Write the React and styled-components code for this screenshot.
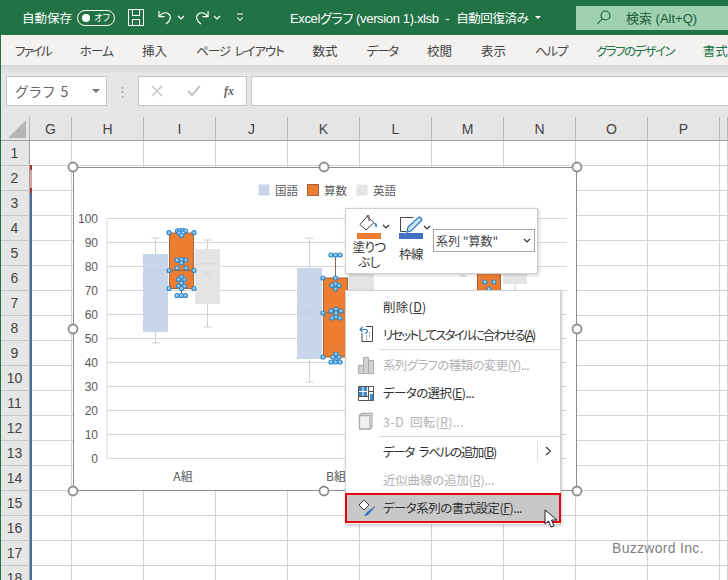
import React from 'react';
import styled, { createGlobalStyle } from 'styled-components';

const GlobalStyle = createGlobalStyle`
  html, body { margin: 0; padding: 0; background: #fff; }
  * { box-sizing: border-box; }
  body {
    font-family: "Noto Sans CJK JP", "Noto Sans", sans-serif;
    font-feature-settings: "palt";
    overflow: hidden;
  }
`;

const LATIN = '"Liberation Sans", "Noto Sans CJK JP", sans-serif';

const Page = styled.div`
  position: relative;
  width: 728px;
  height: 580px;
  overflow: hidden;
  background: #fff;
`;

/* title bar */
const TitleBar = styled.div`
  display: flex;
  align-items: center;
  height: 35px;
  padding-left: 22px;
  background: #217346;
  color: #fff;
`;

const AutoSave = styled.span`
  width: 55px;
  font-size: 12.5px;
  white-space: nowrap;
`;

const Toggle = styled.span`
  display: flex;
  align-items: center;
  justify-content: space-between;
  width: 38px;
  height: 16px;
  padding: 0 4px;
  border: 1px solid #fff;
  border-radius: 8px;
  font-size: 9px;
  &::before {
    content: '';
    width: 8px;
    height: 8px;
    border-radius: 50%;
    background: #fff;
  }
`;

const QuickIcons = styled.div`
  display: flex;
  align-items: center;
  width: 175px;
  height: 35px;
  padding-left: 13px;
`;

const QuickIcon = styled.svg`
  display: block;
  flex: none;
  margin-right: ${({ $gap }) => $gap || 0}px;
  fill: none;
  stroke: ${({ $stroke }) => $stroke || '#fff'};
`;

const DocTitle = styled.div`
  display: flex;
  align-items: center;
  width: 286px;
  font-family: ${LATIN};
  font-size: 13px;
  letter-spacing: -0.35px;
  white-space: pre;
`;

const TitleStatus = styled.span`
  margin-left: 7px;
  font-family: "Noto Sans CJK JP", sans-serif;
  font-size: 12.5px;
  letter-spacing: -0.4px;
`;

const TitleArrow = styled.span`
  width: 0;
  height: 0;
  margin-left: 7px;
  border-left: 3px solid transparent;
  border-right: 3px solid transparent;
  border-top: 3px solid #fff;
`;

const SearchBox = styled.div`
  display: flex;
  align-items: center;
  gap: 15px;
  width: 152px;
  height: 24px;
  padding-left: 21px;
  background: #9fd0b0;
  color: #1e5d39;
  font-family: ${LATIN};
  font-size: 13px;
  white-space: nowrap;
`;

/* ribbon tabs */
const Tabs = styled.div`
  display: flex;
  align-items: center;
  gap: 29px;
  height: 30px;
  padding-left: 15px;
  background: #f3f2f1;
  overflow: hidden;
`;

const Tab = styled.span`
  flex: none;
  font-size: 12.5px;
  letter-spacing: ${({ $spacing }) => $spacing || 0}px;
  word-spacing: 3px;
  white-space: pre;
  color: ${({ $accent }) => ($accent ? '#217346' : '#444')};
`;

/* formula bar */
const FormulaBar = styled.div`
  display: flex;
  gap: 4px;
  height: 52px;
  padding: 11px 0 0 6px;
  background: linear-gradient(#d6d6d6, #e6e6e6 9px);
`;

const NameBox = styled.div`
  display: flex;
  align-items: center;
  justify-content: space-between;
  width: 101px;
  height: 30px;
  padding: 0 6px 0 8px;
  background: #fff;
  border: 1px solid #c6c6c6;
  color: #666;
  font-size: 14px;
  letter-spacing: 1.5px;
`;

const DownArrow = styled.span`
  width: 0;
  height: 0;
  border-left: 4px solid transparent;
  border-right: 4px solid transparent;
  border-top: 4px solid #777;
`;

const Grip = styled.span`
  width: 23px;
  height: 30px;
  text-align: center;
  line-height: 29px;
  color: #aaa;
  font-size: 13px;
`;

const FormulaButtons = styled.div`
  display: flex;
  align-items: center;
  justify-content: space-between;
  width: 109px;
  height: 30px;
  padding: 0 12px;
  background: #fff;
  border: 1px solid #c6c6c6;
`;

const FxLabel = styled.span`
  font-family: "Liberation Serif", serif;
  font-style: italic;
  font-weight: bold;
  font-size: 12px;
  color: #666;
`;

const FormulaInput = styled.div`
  flex: 1;
  height: 30px;
  background: #fff;
  border: 1px solid #c6c6c6;
  border-right: 0;
`;

/* sheet */
const SheetRow = styled.div`
  display: flex;
  height: ${({ $header }) => ($header ? '24px' : '25px')};
`;

const Corner = styled.div`
  position: relative;
  width: 30px;
  background: #e6e6e6;
  border-right: 1px solid #b5b5b5;
  border-bottom: 1px solid #a0a0a0;
  &::after {
    content: '';
    position: absolute;
    right: 3px;
    bottom: 2px;
    border-style: solid;
    border-width: 0 0 18px 18px;
    border-color: transparent transparent #b5b5b5 transparent;
  }
`;

const ColHead = styled.div`
  display: flex;
  align-items: center;
  justify-content: center;
  flex: none;
  width: ${({ $w }) => $w}px;
  background: #e6e6e6;
  border-right: 1px solid #b5b5b5;
  border-bottom: 1px solid #a0a0a0;
  font-family: ${LATIN};
  font-size: 14px;
  color: #444;
`;

const RowHead = styled.div`
  display: flex;
  align-items: center;
  justify-content: center;
  flex: none;
  width: 30px;
  background: #e6e6e6;
  border-right: 1px solid #a0a0a0;
  border-bottom: 1px solid #c6c6c6;
  font-family: ${LATIN};
  font-size: 14px;
  color: #444;
`;

const Cell = styled.div`
  flex: none;
  width: ${({ $w }) => $w}px;
  border-right: 1px solid #d4d4d4;
  border-bottom: 1px solid #d4d4d4;
`;

const EdgeStrip = styled.div`
  position: absolute;
  left: 0;
  top: 35px;
  bottom: 0;
  width: 1px;
  background: #217346;
`;

const RangeMark = styled.div`
  position: absolute;
  left: 30px;
  top: ${({ $top }) => $top}px;
  width: 1.5px;
  height: ${({ $h }) => $h}px;
  background: ${({ $color }) => $color};
`;

/* chart */
const ChartArea = styled.div`
  position: absolute;
  left: 73px;
  top: 167px;
  width: 504px;
  height: 324px;
  background: #fff;
  border: 1px solid #8c8c8c;
`;

const ChartSvg = styled.svg`
  position: absolute;
  left: -1px;
  top: -1px;
  overflow: visible;
  font-family: ${LATIN};
`;

const CjkText = styled.text`
  font-family: "Noto Sans CJK JP", sans-serif;
`;

/* mini toolbar */
const MiniToolbar = styled.div`
  position: absolute;
  left: 345px;
  top: 208px;
  display: flex;
  width: 193px;
  height: 66px;
  padding-left: 6px;
  background: #fff;
  border: 1px solid #cfcfcf;
  box-shadow: 1px 1px 3px rgba(0, 0, 0, 0.2);
`;

const MiniButton = styled.div`
  display: flex;
  flex-direction: column;
  align-items: flex-start;
  flex: none;
  width: ${({ $w }) => $w}px;
  padding-top: 6px;
`;

const MiniIconRow = styled.div`
  display: flex;
  align-items: flex-end;
  flex: none;
  height: 18px;
`;

const Swatch = styled.div`
  flex: none;
  width: 24px;
  height: 6px;
  margin-left: 5px;
  background: ${({ $color }) => $color};
`;

const MiniLabel = styled.div`
  flex: none;
  width: 40px;
  margin: ${({ $mt }) => $mt}px 0 0 -3px;
  font-size: 12.5px;
  line-height: 15px;
  letter-spacing: -0.6px;
  text-align: center;
  color: #333;
`;

const Chevron = styled.svg`
  display: block;
  flex: none;
  margin: ${({ $margin }) => $margin || 0};
  fill: none;
  stroke: #333;
  stroke-width: 1.2;
`;

const SeriesSelect = styled.div`
  display: flex;
  align-items: center;
  justify-content: space-between;
  flex: none;
  width: 102px;
  height: 23px;
  margin-top: 20px;
  padding: 0 2px;
  border: 1px solid #a6a6a6;
  font-size: 12px;
  color: #444;
  white-space: pre;
`;

/* context menu */
const Menu = styled.div`
  position: absolute;
  left: 345px;
  top: 290px;
  width: 216px;
  height: 235px;
  padding: 1px 0 0;
  background: #fff;
  border: 1px solid #d0d0d0;
  box-shadow: 1px 1px 3px rgba(0, 0, 0, 0.2);
`;

const MenuItem = styled.div`
  position: relative;
  display: flex;
  align-items: center;
  height: 28.25px;
  padding-left: 37px;
  font-size: 12.5px;
  letter-spacing: ${({ $spacing }) => $spacing || 0}px;
  word-spacing: 3px;
  white-space: pre;
  color: ${({ $disabled }) => ($disabled ? '#b3b3b3' : '#333')};
  background: ${({ $active }) => ($active ? '#c8c8c8' : 'transparent')};
  outline: ${({ $active }) => ($active ? '2px solid #e60012' : 'none')};
  outline-offset: -1px;
`;

const MenuIcon = styled.svg`
  position: absolute;
  left: 12px;
  top: 5px;
`;

const MenuSeparator = styled.div`
  height: 1px;
  margin: 0.5px 0 0.5px 33px;
  background: #dcdcdc;
`;

const SubmenuMark = styled.span`
  position: absolute;
  right: 1px;
  top: 4px;
  display: flex;
  align-items: center;
  justify-content: center;
  width: 22px;
  height: 20px;
  border-left: 1px solid #dcdcdc;
`;

const Cursor = styled.svg`
  position: absolute;
  left: 544px;
  top: 509px;
`;

const Watermark = styled.div`
  position: absolute;
  left: 612px;
  top: 540px;
  font-family: ${LATIN};
  font-size: 14px;
  letter-spacing: 0.3px;
  color: #7f7f7f;
  white-space: nowrap;
`;

const COLUMNS = [
  ['G', 42], ['H', 72], ['I', 72], ['J', 72], ['K', 72], ['L', 72],
  ['M', 72], ['N', 72], ['O', 72], ['P', 72], ['', 8],
];
const ROWS = Array.from({ length: 18 }, (_, i) => i + 1);
const TABS = [
  { label: 'ファイル', spacing: -1.9 },
  { label: 'ホーム', spacing: -0.8 },
  { label: '挿入' },
  { label: 'ページ レイアウト', spacing: -1.1 },
  { label: '数式' },
  { label: 'データ', spacing: -1.2 },
  { label: '校閲' },
  { label: '表示' },
  { label: 'ヘルプ', spacing: -1.2 },
  { label: 'グラフのデザイン', spacing: -1.6, accent: true },
  { label: '書式', accent: true },
];

const y = v => 458.5 - v * 2.4;
const BLUE = '#c8d5ea';
const GREY = '#e4e4e4';
const ORANGE = '#ed7d31';

const BOXES = [
  { x: 143, w: 25, top: 254, bottom: 332, med: 270, wt: 238, wb: 343, fill: BLUE, line: '#c4cdd9' },
  { x: 195, w: 25, top: 249, bottom: 304, med: 264, wt: 240, wb: 327, fill: GREY, line: '#d4d4d4' },
  { x: 297, w: 25, top: 268, bottom: 359, med: 312, wt: 238, wb: 382, fill: BLUE, line: '#c4cdd9' },
  { x: 349, w: 25, top: 262, bottom: 340, med: 300, wt: 262, wb: 340, fill: GREY, line: '#d4d4d4' },
  { x: 503, w: 24, top: 250, bottom: 284, med: 262, wt: 250, wb: 300, fill: GREY, line: '#d4d4d4' },
];

const ORANGE_BOXES = [
  { x: 169, w: 25, top: 233, bottom: 288.5, med: 270.5, wt: 233, wb: 295.5 },
  { x: 323, w: 25, top: 278, bottom: 357, med: 313, wt: 255, wb: 362 },
  { x: 477, w: 24, top: 250, bottom: 300, med: 270, wt: 250, wb: 300 },
];

const POINTS = [
  [169, 232.7], [194, 232.7], [177.5, 231], [180, 230.5], [183, 230.5], [185.5, 231], [179, 233], [183, 233], [181.5, 235.5],
  [177, 260], [181.5, 259.5], [186, 260], [181.5, 263], [177, 268], [186, 268],
  [169, 270.5], [194, 270.5], [181.5, 277], [178.5, 279.5], [184.5, 279.5], [181.5, 283], [178.5, 286], [184.5, 286],
  [169, 288.5], [194, 288.5], [181.5, 288.5], [177, 295.5], [181.5, 295.5], [185.5, 295.5],
  [323, 278], [335.5, 278], [331, 255], [335.5, 255], [340, 255], [335.5, 284], [332, 285.5], [339, 285.5], [335.5, 289],
  [323, 313], [336, 309], [331, 311], [341, 311], [336, 313], [332, 318], [336, 317], [340, 318],
  [323, 357], [336, 354], [333, 357], [339, 357], [336, 360], [331, 362], [335.5, 362], [340, 362],
  [485, 282], [494, 282], [489, 289],
];

const HANDLES = [
  [73, 167], [324, 167], [577, 167], [73, 329], [577, 329], [73, 491], [324, 491], [577, 491],
];

const LEGEND = [
  { x: 258, fill: BLUE, stroke: 'none', label: '国語' },
  { x: 307, fill: ORANGE, stroke: '#a5633a', label: '算数' },
  { x: 356, fill: GREY, stroke: 'none', label: '英語' },
];

function Chart() {
  return (
    <ChartArea>
      <ChartSvg width="504" height="324" viewBox="73 167 504 324">
        {[0, 10, 20, 30, 40, 50, 60, 70, 80, 90, 100].map(v => (
          <g key={v}>
            <line x1="107" x2="567" y1={y(v)} y2={y(v)} stroke="#d9d9d9" />
            <text x="98" y={y(v) + 4.5} textAnchor="end" fontSize="12" fill="#595959">{v}</text>
          </g>
        ))}
        <line x1="107" x2="107" y1={y(100)} y2={y(0)} stroke="#d9d9d9" />

        {LEGEND.map(l => (
          <g key={l.label}>
            <rect x={l.x + 0.5} y="184.5" width="11" height="11" fill={l.fill} stroke={l.stroke} />
            <CjkText x={l.x + 17} y="195" fontSize="11.5" fill="#595959">{l.label}</CjkText>
          </g>
        ))}

        {BOXES.map(b => (
          <g key={b.x}>
            <line x1={b.x + b.w / 2} x2={b.x + b.w / 2} y1={b.wt} y2={b.wb} stroke="#cdd2d9" />
            <line x1={b.x + b.w / 2 - 4} x2={b.x + b.w / 2 + 4} y1={b.wt} y2={b.wt} stroke="#cdd2d9" />
            <line x1={b.x + b.w / 2 - 4} x2={b.x + b.w / 2 + 4} y1={b.wb} y2={b.wb} stroke="#cdd2d9" />
            <rect x={b.x} y={b.top} width={b.w} height={b.bottom - b.top} fill={b.fill} />
            <line x1={b.x} x2={b.x + b.w} y1={b.med} y2={b.med} stroke={b.line} />
          </g>
        ))}
        <path d="M153 280l6 6m0-6l-6 6M204.500 270l6 6m0-6l-6 6M306 310l7 7m0-7l-7 7" stroke="#bcc6d6" fill="none" opacity="0.6" />

        {ORANGE_BOXES.map(b => (
          <g key={b.x}>
            <line x1={b.x + b.w / 2} x2={b.x + b.w / 2} y1={b.wt} y2={b.wb} stroke="#8a6a58" />
            <rect x={b.x + 0.5} y={b.top} width={b.w - 1} height={b.bottom - b.top} fill={ORANGE} stroke="#a5633a" />
            <line x1={b.x} x2={b.x + b.w} y1={b.med} y2={b.med} stroke="#a5633a" />
          </g>
        ))}
        <line x1="459" x2="467" y1="276" y2="276" stroke="#cdd2d9" />
        <line x1="463" x2="463" y1="260" y2="276" stroke="#cdd2d9" />

        {POINTS.map(([px, py]) => (
          <circle key={`${px}-${py}`} cx={px} cy={py} r="2" fill="#9fd3f5" stroke="#2f86c9" strokeWidth="1.2" />
        ))}

        <CjkText x="183" y="481" textAnchor="middle" fontSize="12" fill="#595959">A組</CjkText>
        <CjkText x="336" y="481" textAnchor="middle" fontSize="12" fill="#595959">B組</CjkText>

        {HANDLES.map(([hx, hy]) => (
          <circle key={`${hx}-${hy}`} cx={hx} cy={hy} r="4.5" fill="#fff" stroke="#8c8c8c" strokeWidth="1.8" />
        ))}
      </ChartSvg>
    </ChartArea>
  );
}

const DownChevron = ({ margin }) => (
  <Chevron $margin={margin} width="8" height="5" viewBox="0 0 8 5"><path d="M1 1l3 3 3-3" /></Chevron>
);

function App() {
  return (
    <Page>
      <GlobalStyle />
      <TitleBar>
        <AutoSave>自動保存</AutoSave>
        <Toggle>オフ</Toggle>
        <QuickIcons>
          <QuickIcon $gap={14} width="16" height="17" viewBox="0 0 16 17" strokeWidth="1">
            <path d="M.5.5h15v16H.5zM4.5.5v6h7v-6M4.5 16.500v-6h7v6" />
          </QuickIcon>
          <QuickIcon $gap={4} width="15" height="17" viewBox="0 0 16 17" strokeWidth="1.2">
            <path d="M1 1.500v6h6M1.500 7C4 4 8 2.500 11 4.500c3.500 2.500 3 7-2.500 11" />
          </QuickIcon>
          <QuickIcon $gap={9} width="8" height="5" viewBox="0 0 8 5" strokeWidth="1.2"><path d="M1 1l3 3 3-3" /></QuickIcon>
          <QuickIcon $gap={4} width="15" height="17" viewBox="0 0 16 17" strokeWidth="1.2">
            <path d="M15 1.500v6H9M14.500 7C12 4 8 2.500 5 4.500 1.500 7 2 11.500 7.500 15.500" />
          </QuickIcon>
          <QuickIcon $gap={15} width="8" height="5" viewBox="0 0 8 5" strokeWidth="1.2"><path d="M1 1l3 3 3-3" /></QuickIcon>
          <QuickIcon width="8" height="9" viewBox="0 0 8 9" strokeWidth="1.1">
            <path d="M1 1h6M1.500 4.500L4 7.500l2.500-3" />
          </QuickIcon>
        </QuickIcons>
        <DocTitle>
          {'Excelグラフ (version 1).xlsb  -'}
          <TitleStatus>自動回復済み</TitleStatus>
          <TitleArrow />
        </DocTitle>
        <SearchBox>
          <QuickIcon $stroke="#1e5d39" width="14" height="15" viewBox="0 0 14 15" strokeWidth="1.1">
            <circle cx="8.5" cy="5.5" r="4.5" />
            <path d="M5 9l-4.500 5" />
          </QuickIcon>
          検索 (Alt+Q)
        </SearchBox>
      </TitleBar>

      <Tabs>
        {TABS.map(t => <Tab key={t.label} $spacing={t.spacing} $accent={t.accent}>{t.label}</Tab>)}
      </Tabs>

      <FormulaBar>
        <NameBox>グラフ 5<DownArrow /></NameBox>
        <Grip>⋮</Grip>
        <FormulaButtons>
          <svg width="12" height="12" viewBox="0 0 12 12" stroke="#c4c4c4" strokeWidth="1.5"><path d="M1 1l10 10M11 1L1 11" /></svg>
          <svg width="14" height="12" viewBox="0 0 14 12" fill="none" stroke="#c4c4c4" strokeWidth="2"><path d="M1 6l4 4 8-9" /></svg>
          <FxLabel>fx</FxLabel>
        </FormulaButtons>
        <FormulaInput />
      </FormulaBar>

      <SheetRow $header>
        <Corner />
        {COLUMNS.map(([name, w]) => <ColHead key={name || 'rest'} $w={w}>{name}</ColHead>)}
      </SheetRow>
      {ROWS.map(r => (
        <SheetRow key={r}>
          <RowHead>{r}</RowHead>
          {COLUMNS.map(([name, w]) => <Cell key={name || 'rest'} $w={w} />)}
        </SheetRow>
      ))}

      <EdgeStrip />
      <RangeMark $top={165} $h={28} $color="#d9a0a0" />
      <RangeMark $top={165} $h={5} $color="#a8323a" />
      <RangeMark $top={188} $h={5} $color="#a8323a" />
      <RangeMark $top={193} $h={387} $color="#4a6f9c" />

      <Chart />

      <MiniToolbar>
        <MiniButton $w={42}>
          <MiniIconRow>
            <svg width="30" height="18" viewBox="0 0 30 18" fill="none">
              <path d="M15 1.500l-7 8 6 5.500 8-7.500z" stroke="#444" />
              <path d="M15 2V1c0-1.500 2-1.500 2 0v5" stroke="#444" />
              <path d="M22 8c2-1 3 1 3 3 0 1-1 2-1.500 1-.5-1-.5-3-1.500-4z" fill="#3a7dbd" />
            </svg>
            <DownChevron margin="0 0 4px 0" />
          </MiniIconRow>
          <Swatch $color={ORANGE} />
          <MiniLabel $mt={0}>塗りつ<br />ぶし</MiniLabel>
        </MiniButton>
        <MiniButton $w={29}>
          <MiniIconRow>
            <svg width="30" height="18" viewBox="0 0 30 18" fill="none">
              <path d="M12 16.500H6.500V2.500h13" stroke="#444" />
              <path d="M13 17l1-5L24 3c1-1 2-1 3 0s1 2 0 3L17 16z" fill="#cfe3f5" stroke="#2f7abf" strokeWidth="1.3" />
            </svg>
          </MiniIconRow>
          <Swatch $color="#4472c4" />
          <MiniLabel $mt={7}>枠線</MiniLabel>
        </MiniButton>
        <DownChevron margin="16px 2px 0 0" />
        <SeriesSelect>
          {'系列 "算数"'}
          <DownChevron margin="0 1px 0 0" />
        </SeriesSelect>
      </MiniToolbar>

      <Menu>
        <MenuItem $spacing={0.3}>削除(<u>D</u>)</MenuItem>
        <MenuItem $spacing={-1.85}>
          <MenuIcon width="16" height="18" viewBox="0 0 16 18" fill="none">
            <path d="M4 8v8.500h10.500v-15H8" stroke="#444" />
            <path d="M8 4.500H2M4.500 2L2 4.500 4.500 7M8 4.500c2 0 2 4-1 4" stroke="#2f7abf" strokeWidth="1.2" />
            <path d="M8 11h1M8 14h1M11 8h1M11 11h1" stroke="#444" />
          </MenuIcon>
          リセットしてスタイルに合わせる(<u>A</u>)
        </MenuItem>
        <MenuSeparator />
        <MenuItem $disabled $spacing={-0.65}>
          <MenuIcon width="16" height="18" viewBox="0 0 16 18" fill="#d2d2d2" stroke="#ababab">
            <path d="M.5 9.500h5v8h-5zM5.500 1.500h5v16h-5zM10.500 4.500h5v13h-5z" />
          </MenuIcon>
          系列グラフの種類の変更(<u>Y</u>)...
        </MenuItem>
        <MenuItem $spacing={-0.6}>
          <MenuIcon width="16" height="18" viewBox="0 0 16 18" fill="none">
            <path d="M.5 2.500h15v14H.5z" stroke="#555" fill="#fff" />
            <path d="M1 3h3.500v4H1zM5.500 3H9v4H5.500zM1 8h3.500v4H1zM5.500 8H9v4H5.500z" fill="#3b87c8" />
            <path d="M12 10h3v6h-3z" fill="#3b87c8" />
            <path d="M10.500 3v13M1 12.500h9.500M10.500 7.500h5" stroke="#555" />
          </MenuIcon>
          データの選択(<u>E</u>)...
        </MenuItem>
        <MenuItem $disabled $spacing={0.3}>
          <MenuIcon width="16" height="18" viewBox="0 0 16 18" fill="none" stroke="#aaa" strokeWidth="1.3">
            <path d="M1.500 3.500L4 1.500h10v13l-2 2.500" />
            <path d="M1.500 3.500H12V17H1.500z" fill="#f0f0f0" />
          </MenuIcon>
          3-D 回転(<u>R</u>)...
        </MenuItem>
        <MenuSeparator />
        <MenuItem $spacing={-1.3}>
          データ ラベルの追加(<u>B</u>)
          <SubmenuMark>
            <svg width="7" height="10" viewBox="0 0 7 10" fill="none" stroke="#444" strokeWidth="1.2"><path d="M1 1l4.500 4L1 9" /></svg>
          </SubmenuMark>
        </MenuItem>
        <MenuItem $disabled $spacing={-0.2}>近似曲線の追加(<u>R</u>)...</MenuItem>
        <MenuItem $active $spacing={-0.55}>
          <MenuIcon width="18" height="18" viewBox="0 0 18 18" fill="none">
            <path d="M6 1L1 6l5 5 5-5z" stroke="#444" fill="#fff" />
            <path d="M17 7L9 13l-3 4c2 0 4-.5 5-2l6-7z" fill="#2f7abf" />
          </MenuIcon>
          データ系列の書式設定(<u>F</u>)...
        </MenuItem>
      </Menu>

      <Cursor width="15" height="20" viewBox="0 0 15 20">
        <path d="M1 1v14l3.500-3 2.500 6 3-1-2.500-6H13z" fill="#fff" stroke="#222" />
      </Cursor>

      <Watermark>Buzzword Inc.</Watermark>
    </Page>
  );
}

export default App;
